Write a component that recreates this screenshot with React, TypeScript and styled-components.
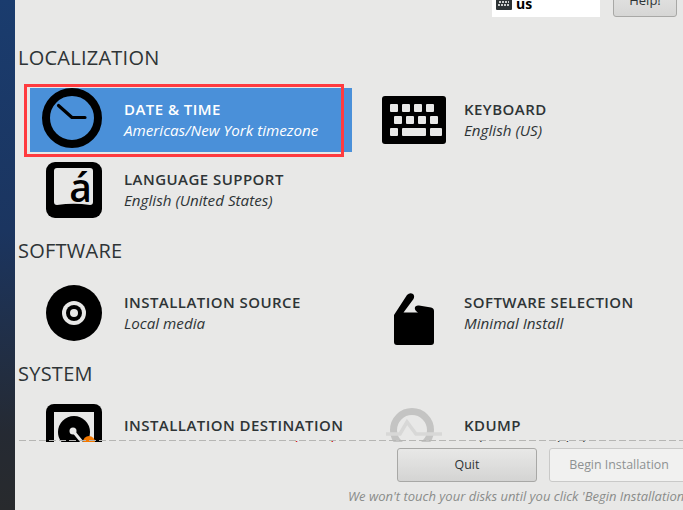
import React from 'react';
import styled, { createGlobalStyle } from 'styled-components';

const GlobalStyle = createGlobalStyle`
  html, body {
    margin: 0;
    padding: 0;
    background: #e8e8e7;
  }
  body {
    font-family: "Open Sans", "Noto Sans", sans-serif;
    color: #2e3436;
  }
`;

const Page = styled.div`
  width: 683px;
  height: 510px;
  display: flex;
  overflow: hidden;
`;

const Sidebar = styled.aside`
  width: 15px;
  flex: none;
  background: linear-gradient(180deg, #1a3c6e 0%, #1b3560 45%, #252a33 85%, #282a2d 100%);
`;

const Main = styled.main`
  flex: 1;
  min-width: 0;
  display: flex;
  flex-direction: column;
  background: #e8e8e7;
`;

const Header = styled.header`
  height: 17px;
  flex: none;
  overflow: hidden;
  display: flex;
  justify-content: flex-end;
  align-items: flex-end;
  gap: 13px;
  padding-right: 6px;
`;

const LayoutBox = styled.div`
  width: 108px;
  height: 30px;
  box-sizing: border-box;
  padding: 0 0 7px 4px;
  display: flex;
  align-items: flex-end;
  gap: 4px;
  background: #fff;
  color: #000;
  font-size: 14px;
  font-weight: 700;
  line-height: 13px;
`;

const HelpButton = styled.button`
  width: 64px;
  height: 34px;
  padding: 0 0 7px;
  display: flex;
  align-items: flex-end;
  justify-content: center;
  border: 1px solid #a8a8a6;
  border-radius: 3px;
  background: linear-gradient(180deg, #e8e8e7, #d6d6d5);
  color: #2e3436;
  font: 13px "Open Sans", sans-serif;
`;

const Content = styled.div`
  height: 425px;
  flex: none;
  box-sizing: border-box;
  overflow: hidden;
  padding-top: 26px;
  display: flex;
  flex-direction: column;
  gap: 14px;
`;

const SectionTitle = styled.h2`
  margin: 0 0 15px 3px;
  height: 30px;
  font-size: 20px;
  font-weight: 400;
  letter-spacing: 0.25px;
  line-height: 30px;
  color: #2e3436;
`;

const SpokeGrid = styled.div`
  margin-left: 15px;
  display: grid;
  grid-template-columns: 322px 1fr;
  column-gap: 18px;
  row-gap: 6px;
`;

const Spoke = styled.div<{ $selected?: boolean; $second?: boolean }>`
  position: relative;
  height: 64px;
  display: flex;
  align-items: center;
  gap: ${(p) => (p.$second ? '18px' : '20px')};
  padding-left: ${(p) => (p.$second ? '12px' : '10px')};
  background: ${(p) => (p.$selected ? '#4a90d9' : 'transparent')};
  color: ${(p) => (p.$selected ? '#fff' : '#2e3436')};
`;

const SpokeIcon = styled.svg`
  width: 64px;
  height: 64px;
  flex: none;
  display: block;
`;

const SpokeText = styled.div`
  display: flex;
  flex-direction: column;
  gap: 2px;
  white-space: nowrap;
`;

const SpokeName = styled.div`
  font-size: 15px;
  font-weight: 600;
  letter-spacing: 0.45px;
  line-height: 19px;
`;

const SpokeStatus = styled.div<{ $warning?: boolean }>`
  font-size: 15.2px;
  font-style: italic;
  line-height: 19px;
  color: ${(p) => (p.$warning ? '#cc0000' : 'inherit')};
`;

const Annotation = styled.div`
  position: absolute;
  left: -6px;
  top: -4px;
  width: 320px;
  height: 73px;
  box-sizing: border-box;
  border: 3px solid #ff3b3f;
  pointer-events: none;
`;

const Divider = styled.div`
  position: relative;
  z-index: 1;
  height: 1px;
  flex: none;
  margin: -2px 0 0 4px;
  background: repeating-linear-gradient(90deg, #b6b6b4 0 7px, transparent 7px 10px);
`;

const Footer = styled.footer`
  flex: none;
  padding-top: 7px;
  display: flex;
  flex-direction: column;
`;

const ButtonRow = styled.div`
  display: flex;
  gap: 12px;
  margin-left: 382px;
`;

const ActionButton = styled.button<{ $disabled?: boolean }>`
  width: 140px;
  height: 34px;
  flex: none;
  padding: 0 0 2px;
  border: 1px solid ${(p) => (p.$disabled ? '#c9c9c8' : '#a8a8a6')};
  border-radius: 3px;
  background: ${(p) => (p.$disabled ? '#f1f1f0' : 'linear-gradient(180deg, #e8e8e7, #d4d4d3)')};
  color: ${(p) => (p.$disabled ? '#8e9192' : '#2e3436')};
  font: 12.4px "Open Sans", sans-serif;
`;

const Hint = styled.div`
  margin: 5px 0 0 333px;
  font-size: 13px;
  font-style: italic;
  line-height: 18px;
  color: #8a8c8a;
  white-space: nowrap;
`;

const keyRects: [number, number, number][] = [
  [8, 8, 8], [20, 8, 8], [32, 8, 8], [44, 8, 8],
  [12, 20, 8], [24, 20, 8], [36, 20, 8], [48, 20, 8],
  [8, 32, 8], [20, 32, 24], [48, 32, 12],
];

const ClockIcon = () => (
  <SpokeIcon viewBox="0 0 64 64">
    <circle cx="32" cy="30" r="26" fill="none" stroke="#000" strokeWidth="8" />
    <path d="M18.5 17.5 L32 29.5 H45" fill="none" stroke="#000" strokeWidth="3.2" strokeLinecap="round" strokeLinejoin="round" />
  </SpokeIcon>
);

const KeyboardIcon = () => (
  <SpokeIcon viewBox="0 0 64 64">
    <rect x="0" y="8" width="64" height="48" rx="3" fill="#000" />
    {keyRects.map(([x, y, w]) => (
      <rect key={`${x}-${y}`} x={x} y={y + 8} width={w} height="8" rx="1" fill="#e8e8e7" />
    ))}
  </SpokeIcon>
);

const LanguageIcon = () => (
  <SpokeIcon viewBox="0 0 64 64">
    <rect x="6" y="4" width="56" height="56" rx="9" fill="#000" />
    <path d="M17 10 H50 Q53 10 53 13 V44 Q53 47 50 47 Q34 44.5 17 47 Q14 47 14 44 V13 Q14 10 17 10 Z" fill="#e8e8e7" />
    <text x="40.5" y="44" textAnchor="middle" fontFamily="Open Sans, sans-serif" fontSize="39" fontWeight="600" fill="#000">á</text>
  </SpokeIcon>
);

const DiscIcon = () => (
  <SpokeIcon viewBox="0 0 64 64">
    <circle cx="34" cy="32" r="28" fill="#000" />
    <circle cx="34" cy="32" r="12" fill="#e8e8e7" />
    <circle cx="34" cy="32" r="8" fill="#000" />
    <circle cx="34" cy="32" r="4" fill="#e8e8e7" />
  </SpokeIcon>
);

const PackageIcon = () => (
  <SpokeIcon viewBox="0 0 64 64">
    <path
      d="M12 34 L25 14 Q28 11 31 13 Q33 15 31.5 18 L21.5 31.5 H36 Q32 29 33 26 Q34 24 37 24.5 L49 26.5 Q52 27 52 30 V61 Q52 64 49 64 H15 Q12 64 12 61 Z"
      fill="#000"
    />
  </SpokeIcon>
);

const DiskIcon = () => (
  <SpokeIcon viewBox="0 0 64 64">
    <rect x="6" y="0" width="56" height="64" rx="8" fill="#000" />
    <rect x="14" y="8" width="40" height="48" fill="#e8e8e7" />
    <circle cx="34" cy="28" r="16" fill="#000" />
    <path d="M33 27 L42 38" stroke="#e8e8e7" strokeWidth="3" />
    <circle cx="33" cy="27" r="3.5" fill="#e8e8e7" />
    <circle cx="49" cy="38" r="6" fill="#f57900" />
  </SpokeIcon>
);

const KdumpIcon = () => (
  <SpokeIcon viewBox="0 0 64 64">
    <circle cx="30" cy="26" r="18.5" fill="none" stroke="#c4c4c3" strokeWidth="7" />
    <path d="M4 30 H18 L25 18 L34 30 H60" fill="none" stroke="#d8d8d7" strokeWidth="3.5" />
  </SpokeIcon>
);

export default function App() {
  return (
    <>
      <GlobalStyle />
      <Page>
        <Sidebar />
        <Main>
          <Header>
            <LayoutBox>
              <svg width="16" height="14" viewBox="0 0 16 14">
                <rect width="16" height="14" rx="1" fill="#2e3436" />
                <path d="M2 3h12M3 6h10M2 9h12" stroke="#fff" strokeWidth="1.5" strokeDasharray="2 1" />
              </svg>
              us
            </LayoutBox>
            <HelpButton>Help!</HelpButton>
          </Header>
          <Content>
            <section>
              <SectionTitle>LOCALIZATION</SectionTitle>
              <SpokeGrid>
                <Spoke $selected>
                  <ClockIcon />
                  <SpokeText>
                    <SpokeName>DATE &amp; TIME</SpokeName>
                    <SpokeStatus>Americas/New York timezone</SpokeStatus>
                  </SpokeText>
                  <Annotation />
                </Spoke>
                <Spoke $second>
                  <KeyboardIcon />
                  <SpokeText>
                    <SpokeName>KEYBOARD</SpokeName>
                    <SpokeStatus>English (US)</SpokeStatus>
                  </SpokeText>
                </Spoke>
                <Spoke>
                  <LanguageIcon />
                  <SpokeText>
                    <SpokeName>LANGUAGE SUPPORT</SpokeName>
                    <SpokeStatus>English (United States)</SpokeStatus>
                  </SpokeText>
                </Spoke>
              </SpokeGrid>
            </section>
            <section>
              <SectionTitle>SOFTWARE</SectionTitle>
              <SpokeGrid>
                <Spoke>
                  <DiscIcon />
                  <SpokeText>
                    <SpokeName>INSTALLATION SOURCE</SpokeName>
                    <SpokeStatus>Local media</SpokeStatus>
                  </SpokeText>
                </Spoke>
                <Spoke $second>
                  <PackageIcon />
                  <SpokeText>
                    <SpokeName>SOFTWARE SELECTION</SpokeName>
                    <SpokeStatus>Minimal Install</SpokeStatus>
                  </SpokeText>
                </Spoke>
              </SpokeGrid>
            </section>
            <section>
              <SectionTitle>SYSTEM</SectionTitle>
              <SpokeGrid>
                <Spoke>
                  <DiskIcon />
                  <SpokeText>
                    <SpokeName>INSTALLATION DESTINATION</SpokeName>
                    <SpokeStatus $warning>Automatic partitioning selected</SpokeStatus>
                  </SpokeText>
                </Spoke>
                <Spoke $second>
                  <KdumpIcon />
                  <SpokeText>
                    <SpokeName>KDUMP</SpokeName>
                    <SpokeStatus>Kdump is enabled</SpokeStatus>
                  </SpokeText>
                </Spoke>
              </SpokeGrid>
            </section>
          </Content>
          <Divider />
          <Footer>
            <ButtonRow>
              <ActionButton>Quit</ActionButton>
              <ActionButton $disabled>Begin Installation</ActionButton>
            </ButtonRow>
            <Hint>We won't touch your disks until you click 'Begin Installation'.</Hint>
          </Footer>
        </Main>
      </Page>
    </>
  );
}
